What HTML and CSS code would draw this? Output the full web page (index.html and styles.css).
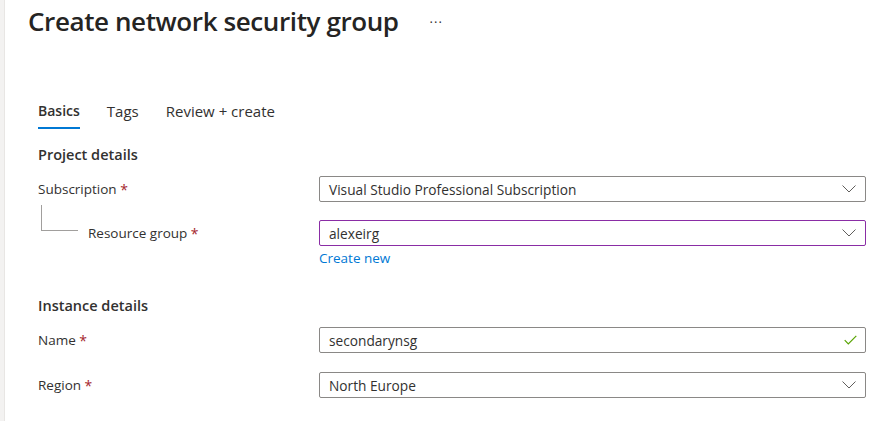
FILE: index.html
```html
<!DOCTYPE html>
<html lang="en">
<head>
<meta charset="utf-8">
<title>Create network security group</title>
<link rel="stylesheet" href="styles.css">
</head>
<body>
<div class="page">
  <aside class="rail"></aside>
  <main class="blade">
    <header class="blade-header">
      <h1 class="title">Create network security group</h1>
      <span class="more" aria-label="More">&middot;&middot;&middot;</span>
    </header>

    <nav class="tabs">
      <span class="tab active">Basics</span>
      <span class="tab">Tags</span>
      <span class="tab">Review + create</span>
    </nav>

    <section class="section">
      <h2 class="section-title">Project details</h2>
      <div class="row">
        <div class="label">Subscription <span class="req">*</span></div>
        <div class="control select">
          <span class="value">Visual Studio Professional Subscription</span>
          <svg class="chev" width="14" height="8" viewBox="0 0 14 8"><path d="M0.5 0.5 L7 7 L13.5 0.5" fill="none" stroke="#605e5c" stroke-width="1"/></svg>
        </div>
      </div>
      <div class="row row-nested">
        <div class="label nested"><span class="tree"></span>Resource group <span class="req">*</span></div>
        <div class="field-col">
          <div class="control select focus">
            <span class="value">alexeirg</span>
            <svg class="chev" width="14" height="8" viewBox="0 0 14 8"><path d="M0.5 0.5 L7 7 L13.5 0.5" fill="none" stroke="#605e5c" stroke-width="1"/></svg>
          </div>
          <a class="link" href="#">Create new</a>
        </div>
      </div>
    </section>

    <section class="section section-instance">
      <h2 class="section-title">Instance details</h2>
      <div class="row">
        <div class="label">Name <span class="req">*</span></div>
        <div class="control">
          <span class="value">secondarynsg</span>
          <svg class="check" width="13" height="10" viewBox="0 0 13 10"><path d="M0.7 5.2 L4.3 8.8 L12.3 0.8" fill="none" stroke="#57a300" stroke-width="1.2"/></svg>
        </div>
      </div>
      <div class="row row-region">
        <div class="label">Region <span class="req">*</span></div>
        <div class="control select">
          <span class="value">North Europe</span>
          <svg class="chev" width="14" height="8" viewBox="0 0 14 8"><path d="M0.5 0.5 L7 7 L13.5 0.5" fill="none" stroke="#605e5c" stroke-width="1"/></svg>
        </div>
      </div>
    </section>
  </main>
</div>
</body>
</html>
```

FILE: styles.css
```css
* { box-sizing: border-box; }

html, body {
  margin: 0;
  padding: 0;
  background: #ffffff;
}

body {
  font-family: "Open Sans", "Noto Sans", "Liberation Sans", sans-serif;
  font-size: 13px;
  color: #323130;
  width: 879px;
  height: 421px;
  overflow: hidden;
}

.page {
  display: flex;
  height: 421px;
}

.rail {
  width: 5px;
  flex: 0 0 5px;
  background: #f3f2f1;
  border-right: 1px solid #e8e6e4;
}

.blade {
  flex: 1;
  padding-right: 13px;
}

.blade-header {
  display: flex;
  align-items: center;
  height: 42px;
  padding-left: 23px;
}

.title {
  margin: 0;
  font-size: 26px;
  font-weight: 600;
  line-height: 42px;
  color: #252423;
  letter-spacing: -0.4px;
}

.more {
  margin-left: 31px;
  font-size: 13px;
  letter-spacing: 1px;
  color: #323130;
  line-height: 1;
  padding-top: 2px;
}

.tabs {
  display: flex;
  gap: 26px;
  margin-top: 59px;
  padding-left: 33px;
}

.tab {
  font-size: 15px;
  line-height: 20px;
  padding-bottom: 6px;
  border-bottom: 2px solid transparent;
  color: #323130;
}

.tab + .tab {
  margin-left: 1px;
}

.tab.active {
  font-size: 14px;
  font-weight: 600;
  border-bottom-color: #0078d4;
}

.section {
  padding-left: 33px;
}

.section-title {
  margin: 16px 0 11px;
  font-size: 14.5px;
  font-weight: 600;
  line-height: 20px;
  color: #323130;
}

.section-instance .section-title {
  margin-top: 29px;
}

.row {
  display: grid;
  grid-template-columns: 281px 1fr;
  align-items: start;
}

.row-nested {
  margin-top: 18px;
}

.row-region {
  margin-top: 19px;
}

.label {
  display: flex;
  align-items: center;
  height: 26px;
  font-size: 13.5px;
  white-space: pre;
}

.req {
  color: #a4262c;
  font-size: 14px;
}

.label.nested {
  padding-left: 3px;
}

.tree {
  align-self: flex-start;
  width: 37px;
  height: 26px;
  margin-top: -15px;
  margin-right: 10px;
  border-left: 1px solid #a19f9d;
  border-bottom: 1px solid #a19f9d;
}

.field-col {
  display: flex;
  flex-direction: column;
}

.control {
  display: flex;
  align-items: center;
  justify-content: space-between;
  height: 26px;
  padding: 0 9px 0 9px;
  border: 1px solid #8a8886;
  border-radius: 2px;
  background: #fff;
}

.control.focus {
  border-color: #8a2da5;
}

.value {
  font-size: 13.7px;
  color: #323130;
}

.chev {
  display: block;
}

.check {
  display: block;
  margin-right: -1px;
}

.link {
  margin-top: 3px;
  font-size: 13.5px;
  line-height: 18px;
  color: #0078d4;
  text-decoration: none;
}
```
